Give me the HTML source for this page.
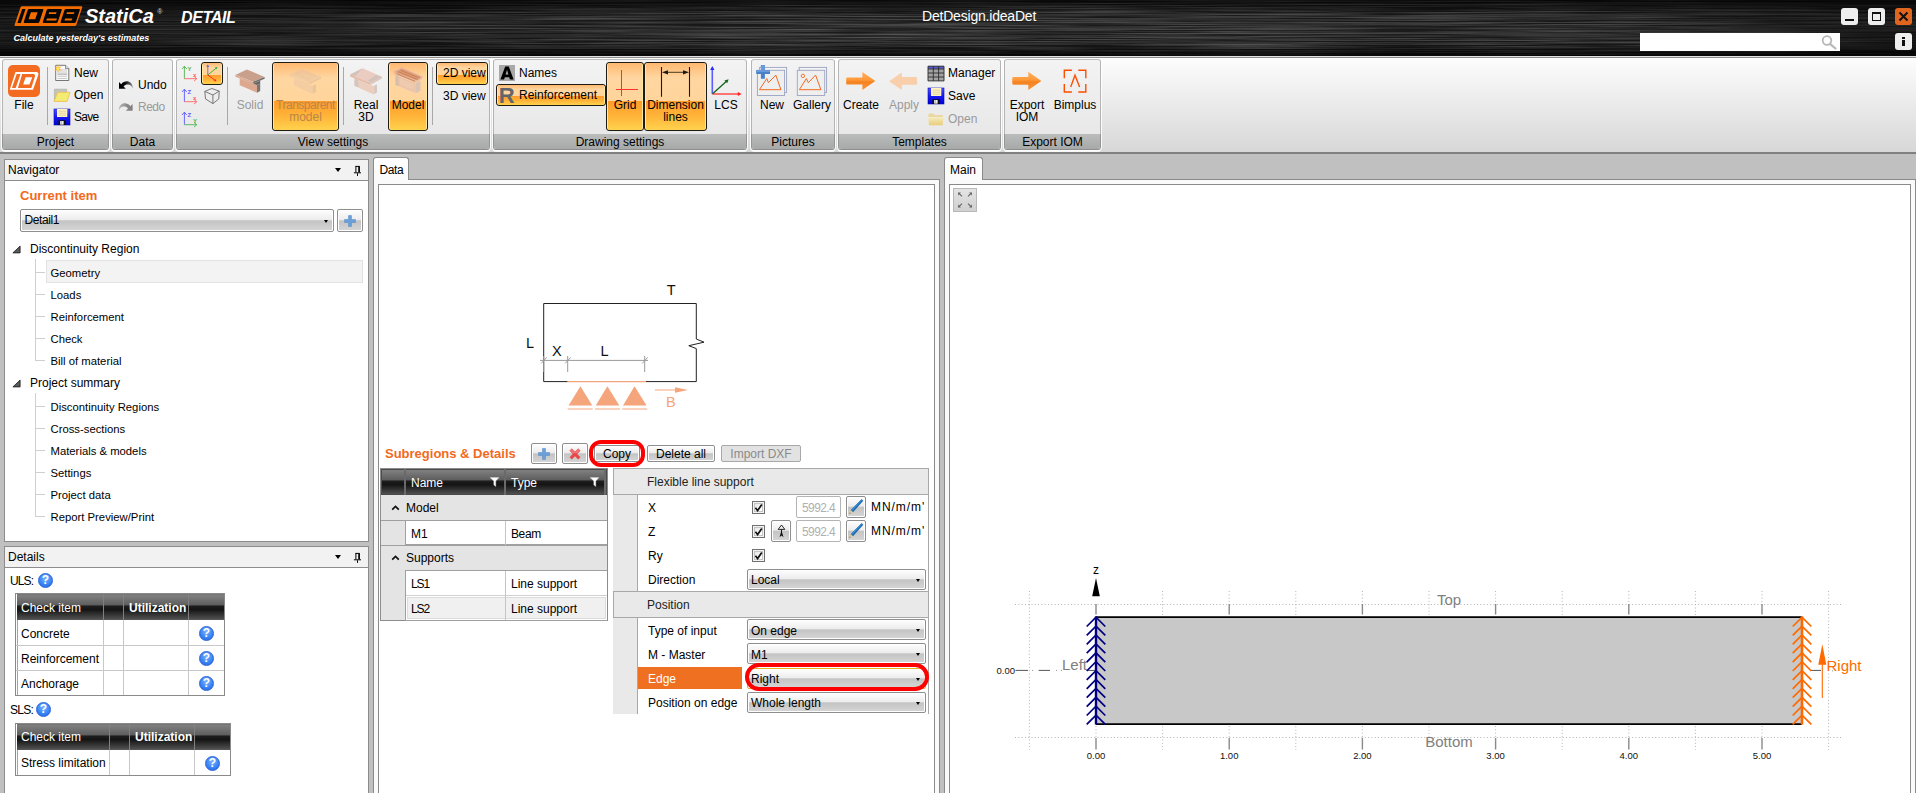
<!DOCTYPE html>
<html><head><meta charset="utf-8"><title>DetDesign.ideaDet</title>
<style>
html,body{margin:0;padding:0}
body{width:1916px;height:793px;overflow:hidden;background:#c0c0c0;font-family:"Liberation Sans",sans-serif;font-size:12px;color:#000;position:relative}
div,span,svg{position:absolute;box-sizing:border-box}
.t{white-space:nowrap;line-height:14px;font-size:12px}
.c{text-align:center}
.tr{font-size:11.3px}
/* title bar */
#tb{left:0;top:0;width:1916px;height:56px;background:linear-gradient(180deg,#000 0,#060606 20%,#0a0a0a 55%,#030303 100%)}
.wb{width:17px;height:17px;border-radius:3px;background:#eeeeee}
/* ribbon */
#rb{left:0;top:56px;width:1916px;height:98px;background:linear-gradient(180deg,#e2e2e2 0,#e2e2e2 1px,#8e8e8e 1px,#8e8e8e 2px,#fdfdfd 2px,#d7d7d7 96px,#808080 96px,#808080 98px)}
.g{top:3px;height:91px;border:1px solid #b4b4b4;border-color:#bcbcbc #b4b4b4 #8e8e8e #b4b4b4;border-radius:3px;background:linear-gradient(180deg,#f3f3f3 0,#ededed 40px,#e9e8e8 74px);box-shadow:0 0 0 1px rgba(255,255,255,.85),0 2px 0 0 rgba(255,255,255,.8)}
.gl{left:0;right:0;bottom:0;height:15.5px;border-radius:0 0 3px 3px;background:linear-gradient(180deg,#bbbdbc 0,#a7a9a8 100%);box-shadow:-1px 0 0 #949494,1px 0 0 #949494;text-align:center;line-height:16.5px;font-size:12px;white-space:nowrap}
.ob{border:1px solid #1e1a14;border-radius:3px;background:linear-gradient(180deg,#ffb870 0,#ffd6a0 22%,#ffd59c 56%,#ff9c2c 57%,#ffb338 78%,#ffd24e 100%);box-shadow:inset 1px 0 0 #ffe9a0,inset -1px 0 0 #ffe9a0}
.sep{width:1px;background:#a8a8a8;top:8px;height:58px}
.dis{color:#9a9a9a}
/* panels */
.ph{background:#f2f2f2;border:1px solid #8c8c8c}
.pb{background:#fff;border:1px solid #8c8c8c}
.tab{background:linear-gradient(180deg,#ffffff,#fafafa);border-radius:3px 3px 0 0;top:157px;height:23px;border:1px solid #8a8a8a;border-bottom:0}
.cmb{border:1px solid #8e8e8e;border-radius:2px;background:linear-gradient(180deg,#fefefe 0,#ededed 45%,#c4c4c4 52%,#d6d6d6 100%);box-shadow:inset 0 0 0 1px #fff}
.cmb i{position:absolute;right:5px;top:50%;margin-top:-1px;border:2.5px solid transparent;border-top:3.5px solid #000;border-bottom:0;width:0;height:0}
.btn{border:1px solid #8e8e8e;border-radius:2px;background:linear-gradient(180deg,#fefefe 0,#ededed 45%,#c4c4c4 52%,#d6d6d6 100%);box-shadow:inset 0 0 0 1px #fff}
.q{width:15px;height:15px;border-radius:50%;background:radial-gradient(circle at 50% 35%,#7db4ff 0,#3b86f5 55%,#1f5fe0 100%);border:1px solid #2a62d8;color:#fff;font-weight:bold;font-size:12px;line-height:13px;text-align:center}
.cb{width:13px;height:13px;background:linear-gradient(135deg,#dcdcdc,#fff 70%);border:1px solid #707070;box-shadow:inset 0 0 0 1px #f4f4f4,inset 0 0 0 2px #c4c4c4}
.th{background:linear-gradient(180deg,#6a6a6a 0,#808080 4%,#5e5e5e 42%,#1e1e1e 46%,#141414 60%,#4c4c4c 94%,#5a5a5a 100%)}
</style></head>
<body>
<div id="tb">
 <svg style="left:0;top:0" width="1916" height="56" viewBox="0 0 1916 56" preserveAspectRatio="none"><defs><filter id="bn" x="0" y="0" width="100%" height="100%"><feTurbulence type="fractalNoise" baseFrequency="0.006 0.75" numOctaves="3" seed="11" result="t"/><feColorMatrix in="t" type="matrix" values="0 0 0 0 1  0 0 0 0 1  0 0 0 0 1  1.0 0 0 0 -0.30"/></filter><linearGradient id="bm" x1="0" y1="0" x2="1" y2="0"><stop offset="0" stop-color="#fff" stop-opacity=".45"/><stop offset=".12" stop-color="#fff" stop-opacity=".6"/><stop offset=".3" stop-color="#fff" stop-opacity=".85"/><stop offset=".5" stop-color="#fff" stop-opacity="1"/><stop offset=".85" stop-color="#fff" stop-opacity=".9"/><stop offset=".95" stop-color="#fff" stop-opacity=".55"/><stop offset="1" stop-color="#fff" stop-opacity=".4"/></linearGradient><mask id="bmk"><rect width="1916" height="56" fill="url(#bm)"/></mask></defs><g mask="url(#bmk)"><rect width="1916" height="56" filter="url(#bn)" opacity=".5"/><rect width="1916" height="56" fill="#fff" opacity=".075"/></g></svg>
 <div style="left:0;top:0;width:1916px;height:56px;background:linear-gradient(180deg,rgba(0,0,0,.65) 0,rgba(0,0,0,0) 28%,rgba(0,0,0,0) 78%,rgba(0,0,0,.75) 100%)"></div>
 <svg style="left:0;top:0" width="170" height="56" viewBox="0 0 170 56">
  <g transform="translate(0,26) skewX(-18.5) translate(0,-26)">
   <rect x="14.2" y="6.2" width="61.8" height="19.8" rx="1.2" fill="#f26c00"/>
   <rect x="16.4" y="8.9" width="3.4" height="14" fill="#050505"/>
   <rect x="22.4" y="8.9" width="15.6" height="14" rx="1.2" fill="#050505"/>
   <rect x="26.3" y="12.2" width="6.7" height="7.1" fill="#f26c00"/>
   <rect x="41.4" y="8.9" width="15" height="14" rx="1.2" fill="#050505"/>
   <rect x="44.6" y="12.2" width="7.4" height="1.9" fill="#f26c00"/>
   <rect x="44.4" y="18.5" width="10" height="1.9" fill="#f26c00"/>
   <rect x="59.2" y="8.9" width="15.3" height="14" rx="1.2" fill="#050505"/>
   <rect x="62.4" y="12.2" width="7.4" height="1.9" fill="#f26c00"/>
   <rect x="62.6" y="18.5" width="7.2" height="1.9" fill="#f26c00"/>
  </g>
 </svg>
 <span class="t" id="sta" style="left:85px;top:4px;font-size:20px;line-height:24px;font-weight:bold;font-style:italic;color:#fff">StatiCa</span>
 <span class="t" style="left:157.3px;top:7.5px;font-size:7px;line-height:8px;color:#ddd">®</span>
 <span class="t" id="det" style="left:181px;top:8.5px;font-size:16px;line-height:18px;font-weight:bold;font-style:italic;color:#fff;letter-spacing:-.35px">DETAIL</span>
 <span class="t" id="tag" style="left:13.5px;top:33px;font-size:9px;line-height:11px;font-weight:bold;font-style:italic;color:#fff">Calculate yesterday's estimates</span>
 <span class="t" id="ttl" style="left:922px;top:8px;font-size:14px;line-height:16px;color:#fff;letter-spacing:-.2px">DetDesign.ideaDet</span>
 <div class="wb" style="left:1841px;top:8px"><div style="left:4px;top:11px;width:9px;height:2px;background:#111"></div></div>
 <div class="wb" style="left:1868px;top:8px"><div style="left:4px;top:4px;width:9px;height:9px;border:1px solid #111;border-top:2px solid #111"></div></div>
 <div class="wb" style="left:1895px;top:8px;background:#e0661f"><svg style="left:3px;top:3px" width="11" height="11" viewBox="0 0 11 11"><path d="M1.5 1.5L9.5 9.5M9.5 1.5L1.5 9.5" stroke="#111" stroke-width="2" fill="none"/></svg></div>
 <div style="left:1640px;top:33px;width:200px;height:18px;background:#fff"></div>
 <svg style="left:1820px;top:34px" width="18" height="16" viewBox="0 0 18 16"><circle cx="7" cy="6.5" r="4.3" fill="none" stroke="#b8b8b8" stroke-width="1.8"/><path d="M10 9.8L15.5 14.5" stroke="#b8b8b8" stroke-width="2.2" stroke-linecap="round"/></svg>
 <div class="wb" style="left:1895px;top:33px"><div style="left:7px;top:4px;width:3px;height:2px;background:#111"></div><div style="left:7px;top:7px;width:3px;height:6px;background:#111"></div></div>
</div>
<div id="rb">
 <div class="g" style="left:2px;width:107px"><div class="gl">Project</div></div>
 <div class="g" style="left:112px;width:61px"><div class="gl">Data</div></div>
 <div class="g" style="left:176px;width:314px"><div class="gl">View settings</div></div>
 <div class="g" style="left:493px;width:254px"><div class="gl">Drawing settings</div></div>
 <div class="g" style="left:751px;width:84px"><div class="gl">Pictures</div></div>
 <div class="g" style="left:838px;width:163px"><div class="gl">Templates</div></div>
 <div class="g" style="left:1004px;width:97px"><div class="gl">Export IOM</div></div>

 <!-- Project -->
 <div style="left:8px;top:9px;width:32px;height:32px;border-radius:5px;background:#f26b21">
  <svg style="left:0;top:0" width="32" height="32" viewBox="0 0 32 32"><path d="M7.5 7.1H28.6a1.9 1.9 0 0 1 1.8 2.5L25 24.8H1.7Z" fill="#fff"/><path d="M8.7 9H12.5L7.7 22.9H3.9Z" fill="#f26b21"/><path d="M14.2 9H25.4a1.7 1.7 0 0 1 1.6 2.3L23.3 22.9H9.9Z" fill="#f26b21"/><path d="M17.6 12.3H24.3L21.4 19.5H15.2Z" fill="#fff"/></svg>
 </div>
 <span class="t c" style="left:4px;width:40px;top:41.5px">File</span>
 <div class="sep" style="left:47px;top:11px"></div>
 <span class="t" style="left:74px;top:9.5px">New</span>
 <span class="t" style="left:74px;top:31.5px">Open</span>
 <span class="t" style="left:74px;top:53.5px;letter-spacing:-.7px">Save</span>
 <!-- Data -->
 <span class="t" style="left:138px;top:21.5px">Undo</span>
 <span class="t dis" style="left:138px;top:43.5px;letter-spacing:-.5px">Redo</span>
 <!-- View settings -->
 <div class="ob" style="left:201px;top:6px;width:22px;height:23px"></div>
 <div class="sep" style="left:227px;top:11px"></div>
 <span class="t c dis" style="left:230px;width:40px;top:41.5px">Solid</span>
 <div class="ob" style="left:272px;top:6px;width:67px;height:69px"></div>
 <span class="t c" style="left:272px;width:67px;top:41.5px;color:#b8864a;line-height:12.2px;margin-top:1px;letter-spacing:-.5px">Transparent<br><span style="position:static;letter-spacing:0">model</span></span>
 <div class="sep" style="left:343px;top:11px"></div>
 <span class="t c" style="left:346px;width:40px;top:42.5px;line-height:12.2px">Real<br>3D</span>
 <div class="ob" style="left:388px;top:6px;width:40px;height:69px"></div>
 <span class="t c" style="left:388px;width:40px;top:41.5px">Model</span>
 <div class="sep" style="left:432px;top:11px"></div>
 <div class="ob" style="left:436px;top:6px;width:52px;height:23px"></div>
 <span class="t" style="left:443px;top:9.5px">2D view</span>
 <span class="t" style="left:443px;top:32.5px">3D view</span>
 <!-- Drawing settings -->
 <span class="t" style="left:519px;top:9.5px">Names</span>
 <div class="ob" style="left:496px;top:28px;width:110px;height:22px"></div>
 <span class="t" style="left:519px;top:31.5px">Reinforcement</span>
 <div class="ob" style="left:606px;top:6px;width:38px;height:69px"></div>
 <span class="t c" style="left:606px;width:38px;top:41.5px">Grid</span>
 <div class="ob" style="left:644px;top:6px;width:63px;height:69px"></div>
 <span class="t c" style="left:644px;width:63px;top:42.5px;line-height:12.2px">Dimension<br>lines</span>
 <span class="t c" style="left:706px;width:40px;top:41.5px">LCS</span>
 <!-- Pictures -->
 <span class="t c" style="left:752px;width:40px;top:41.5px">New</span>
 <span class="t c" style="left:790px;width:44px;top:41.5px">Gallery</span>
 <!-- Templates -->
 <span class="t c" style="left:839px;width:44px;top:41.5px">Create</span>
 <span class="t c dis" style="left:882px;width:44px;top:41.5px">Apply</span>
 <span class="t" style="left:948px;top:9.5px">Manager</span>
 <span class="t" style="left:948px;top:32.5px">Save</span>
 <span class="t dis" style="left:948px;top:55.5px">Open</span>
 <!-- Export -->
 <span class="t c" style="left:1005px;width:44px;top:42.5px;line-height:12.2px">Export<br>IOM</span>
 <span class="t c" style="left:1050px;width:50px;top:41.5px">Bimplus</span>
</div>
<!-- ribbon icons: absolute page coordinates -->
<svg style="left:0;top:56px" width="1110" height="96" viewBox="0 56 1110 96">
<defs><style>.v{stroke:var(--v)}.h{stroke:var(--h)}</style>
 <linearGradient id="arw" x1="0" y1="0" x2="0" y2="1"><stop offset="0" stop-color="#ffb060"/><stop offset=".45" stop-color="#ff9838"/><stop offset=".55" stop-color="#f58220"/><stop offset="1" stop-color="#f9963a"/></linearGradient>
 <linearGradient id="flp" x1="0" y1="0" x2="0" y2="1"><stop offset="0" stop-color="#5050ff"/><stop offset=".5" stop-color="#1818f0"/><stop offset="1" stop-color="#0000d8"/></linearGradient>
 <linearGradient id="fld" x1="0" y1="0" x2="0" y2="1"><stop offset="0" stop-color="#f6ecc0"/><stop offset="1" stop-color="#e8cc78"/></linearGradient>
 <linearGradient id="ug" x1="0" y1="0" x2="1" y2="0"><stop offset="0" stop-color="#000"/><stop offset=".45" stop-color="#0a0a0a"/><stop offset="1" stop-color="#8a8a8a"/></linearGradient><linearGradient id="rg" x1="1" y1="0" x2="0" y2="0"><stop offset="0" stop-color="#7e7e7e"/><stop offset=".45" stop-color="#8c8c8c"/><stop offset="1" stop-color="#b8b8b8"/></linearGradient><g id="floppy"><rect x="0" y="0" width="16" height="16" fill="url(#flp)"/><rect x="0" y="0" width="16" height="16" fill="none" stroke="#0a0ab0" stroke-width=".6"/><rect x="3" y="0" width="10.3" height="8" fill="#fdf3c4"/><path d="M4.5 2.2H12M4.5 4.2H12M4.5 6.2H12" stroke="#d8c890" stroke-width=".7"/><rect x="4.4" y="11.3" width="7.6" height="4.7" fill="#111"/><rect x="6.2" y="12" width="3.4" height="3.6" fill="#fff"/><rect x="7.4" y="12" width=".8" height="3.6" fill="#999"/></g>
 <g id="axs" fill="none" stroke-width=".9"><path d="M2.4 1V13.5" class="v"/><path d="M0 3.8L2.4 1L4.8 3.8" class="v"/><path d="M2.4 13.5H14.8" class="h"/><path d="M12 11.1L14.8 13.5L12 15.9" class="h"/></g>
</defs>
<!-- New doc -->
<g><path d="M55.7 65.3H65.5L68.8 68.6V80.5H55.7Z" fill="#fafafa" stroke="#555" stroke-width=".8"/><path d="M65.5 65.3V68.6H68.8" fill="#ddd" stroke="#555" stroke-width=".6"/><path d="M58 69.9H67M57.5 72H67M57.5 76.3H67M57.5 78.5H67" stroke="#b4b4b4" stroke-width=".7"/><path d="M57.3 74.1H67.2" stroke="#9a9a9a" stroke-width="1"/><path d="M58 64.2L58.9 67.2L61.8 66.3L59.6 68.6L61.8 70.8L58.8 70L58 73L57.2 70L54.2 70.8L56.4 68.6L54.2 66.3L57.1 67.2Z" fill="#ffb030"/><circle cx="58" cy="68.6" r="1.5" fill="#fff060"/></g>
<!-- Open folder -->
<g><path d="M54.4 89.2H66.6V101H54.4Z" fill="#c4c4c0" stroke="#a8a8a0" stroke-width=".6"/><path d="M57.6 92.3H70L67.1 101.4H54.1Z" fill="#f4ec72" stroke="#f0b840" stroke-width=".7"/></g>
<!-- Save floppy -->
<use href="#floppy" x="54" y="109"/>
<!-- Undo -->
<path d="M119 88.7L119 82L121.2 84.2C123.2 81.8 126 80.9 128.6 81.6C131.4 82.4 132.9 85 132.6 88.8C131.9 86.4 130.6 85 128.4 84.6C126.6 84.3 125 84.9 123.6 86.5L125.8 88.7Z" fill="url(#ug)"/>
<!-- Redo -->
<path d="M132.6 110.7L132.6 104L130.4 106.2C128.4 103.8 125.6 102.9 123 103.6C120.2 104.4 118.7 107 119 110.8C119.7 108.4 121 107 123.2 106.6C125 106.3 126.6 106.9 128 108.5L125.8 110.7Z" fill="url(#rg)"/>
<!-- axis icons -->
<g transform="translate(182,65.2)"><use href="#axs" style="--v:#50b450;--h:#ff6464"/></g>
<g transform="translate(182,88.2)"><use href="#axs" style="--v:#5858ff;--h:#ff6464"/></g>
<g transform="translate(182,111.2)"><use href="#axs" style="--v:#5858ff;--h:#50b450"/></g>
<g font-family="Liberation Sans, sans-serif" font-size="6" font-weight="bold"><text x="187.5" y="70.6" fill="#50b450">Y</text><text x="193" y="77" fill="#ff6464">x</text><text x="187.5" y="93.6" fill="#5858ff">Z</text><text x="193" y="100" fill="#ff6464">x</text><text x="187.5" y="116.6" fill="#5858ff">Z</text><text x="193" y="123" fill="#50b450">Y</text></g>
<!-- 3d axis in button -->
<g fill="none" stroke-width="1"><path d="M207.8 75V65.5" stroke="#8a70c8"/><path d="M207.8 75L216.8 67.6" stroke="#40b040"/><path d="M207.8 75L215.6 80.6" stroke="#ff3020"/></g>
<path d="M206.3 67L207.8 64.6L209.3 67Z" fill="#7060d0"/><path d="M214.6 67.6L217.6 66.9L216.4 69.6Z" fill="#40b040"/><path d="M213.6 80.9L216.6 81.3L215.2 78.7Z" fill="#ff3020"/>
<!-- cube -->
<path d="M211.8 88.5L204.8 91.4L212.9 95L219.2 91.1ZM204.8 91.4L205.5 98.9L212.9 103.6V95M212.9 103.6L218.8 98.9L219.2 91.1" fill="none" stroke="#6a6a6a" stroke-width=".9" stroke-linejoin="round"/>
<!-- Solid T-beam -->
<g>
 <path d="M246.9 69.5L235.3 75.1L253.2 81.8L264.6 77Z" fill="#c8a08c"/>
 <path d="M235.3 75.1L253.2 81.8V83.7L235.3 76.8Z" fill="#dcac94"/>
 <path d="M253.2 81.8L264.6 77V78.7L253.2 83.7Z" fill="#74706e"/>
 <path d="M239.7 78.4L257 84.9V92.8L239.7 85.2Z" fill="#dca890"/>
 <path d="M257 84.9L260.2 83.4V90.9L257 92.8Z" fill="#7a7674"/>
 <path d="M253.2 83.7L260.2 80.7V83.4L257 84.9Z" fill="#686462"/>
</g>
<!-- Transparent T-beam -->
<g opacity=".55">
 <path d="M301.5 68.8L289.2 74.5L309.3 82.7L321 76.7Z" fill="#e8c4a4"/>
 <path d="M289.2 74.5L309.3 82.7V84.6L289.2 76.3Z" fill="#eec8a8"/>
 <path d="M309.3 82.7L321 76.7V78.6L309.3 84.6Z" fill="#dcb898"/>
 <path d="M293.9 78.3L312.5 85.9V94L293.9 85.5Z" fill="#ecc6a6"/>
 <path d="M312.5 85.9L316 84.3V92.2L312.5 94Z" fill="#dcb898"/>
 <path d="M296 73.5L303 70.5L315 76L308 79.5Z" fill="none" stroke="#e0b890" stroke-width=".6"/>
</g>
<!-- Real 3D T-beam -->
<g opacity=".75">
 <path d="M362.7 68.2L350.1 74.5L370.3 83L381.9 76.7Z" fill="#e8c0b0"/>
 <path d="M362.7 68.2L350.1 74.5L355 76.5L360 71Z" fill="#c8b4ac"/>
 <path d="M370.3 83L381.9 76.7L376 75L368 80.5Z" fill="#c8b4ac"/>
 <path d="M350.1 74.5L370.3 83V85L350.1 76.4Z" fill="#e0a88c"/>
 <path d="M370.3 83L381.9 76.7V78.6L370.3 85Z" fill="#d8b8a8"/>
 <path d="M354.5 78.3L373.4 86V94.4L354.5 85.8Z" fill="#ecc4b0"/>
 <path d="M354.5 78.3L358.5 80V87.5L354.5 85.8Z" fill="#ccb8b0"/>
 <path d="M373.4 86L377 84.3V92.4L373.4 94.4Z" fill="#d0bcb4"/>
</g>
<!-- Model -->
<g opacity=".8">
 <path d="M393 71.3L401.5 67.3L423.2 76.4L421.5 79.5L415 82.5L394.5 74.5Z" fill="#e4b8a4"/>
 <path d="M395 72L402 68.6L421.5 77L415.5 80Z" fill="#d89070"/>
 <path d="M396.5 73.6L415 81.3M398.5 71.8L418 79.6M400.5 70.3L420 78.2" stroke="#b86840" stroke-width=".9" fill="none"/>
 <path d="M395.5 75L415.5 83V93.5L395.5 85Z" fill="#ecc8b4"/>
 <path d="M395.5 75L398.5 76.2V86.3L395.5 85Z" fill="#ccb8b0"/>
 <path d="M415.5 83L420.5 80.6V91L415.5 93.5Z" fill="#d4c0b8"/>
 <path d="M399 77.5L414 83.5V91L399 85Z" fill="none" stroke="#e0b49c" stroke-width=".6"/>
</g>
<!-- A / R -->
<rect x="499" y="65" width="16" height="16" fill="#a8a8a8"/>
<path d="M505.2 66.6H508.8L513.6 79.6H509.9L509.2 77.2H504.8L504.1 79.6H500.4ZM505.6 74.4H508.4L507 69.8Z" fill="#000"/>
<text x="498.8" y="102.9" font-family="Liberation Sans, sans-serif" font-size="22" font-weight="bold" fill="#62666a">R</text>
<!-- grid cross -->
<path d="M621.5 70V96M616 89.5H638" stroke="#ff3030" stroke-width="1" fill="none"/>
<!-- dimension -->
<path d="M661.5 67V96.8M689.5 67V96.8" stroke="#1a1a1a" stroke-width="1.1" fill="none"/><path d="M665 72.3H686" stroke="#4a3a20" stroke-width="1"/><path d="M662 72.3L668 70.2V74.4ZM689 72.3L683 70.2V74.4Z" fill="#1a1a1a"/>
<!-- LCS -->
<g fill="none"><path d="M712.3 94V68" stroke="#5c5cff" stroke-width="1.6"/><path d="M712.3 94H739" stroke="#ff5454" stroke-width="1.6"/><path d="M712.6 93.7L726.5 81.2" stroke="#106818" stroke-width="1.3"/></g>
<path d="M710.2 70L712.3 66L714.4 70Z" fill="#2a2aff"/><path d="M737.8 91.9L741.6 94L737.8 96.1Z" fill="#ff2020"/><path d="M724.4 80.4L728.6 79.2L727.2 83.2Z" fill="#106818"/>
<!-- Pictures New -->
<g><rect x="759.6" y="67.4" width="27" height="25" fill="#f4f4f4" stroke="#9aa4c0" stroke-width=".9"/><rect x="757.4" y="70.3" width="27.2" height="25.2" fill="#efefef" stroke="#9aa4c0" stroke-width=".9"/><path d="M759.4 89.7L766.8 78.5L768.4 82.7L775.8 75.1L780.9 89.7Z" fill="none" stroke="#f26a21" stroke-width="1"/><path d="M760.9 65H764.9V70.1H770V74.1H764.9V78.8H760.9V74.1H756.2V70.1H760.9Z" fill="#4a80c8"/><path d="M760.9 65H764.9V70.1H770V72H756.2V70.1H760.9Z" fill="#6a98d8"/></g>
<!-- Gallery -->
<g><rect x="799.2" y="67.4" width="27.4" height="25" fill="#f4f4f4" stroke="#9aa4c0" stroke-width=".9"/><rect x="797.3" y="70.3" width="27.4" height="25.2" fill="#efefef" stroke="#9aa4c0" stroke-width=".9"/><path d="M799.3 89.7L806.4 78.5L808.3 82.7L815.6 75.1L820.9 89.7Z" fill="none" stroke="#f26a21" stroke-width="1"/><circle cx="802.9" cy="75.9" r="1.7" fill="none" stroke="#f26a21" stroke-width=".9"/></g>
<!-- Create arrow -->
<path d="M847.4 77.6H862.4V71.9L875.3 81L862.4 90.1V84.6H847.4Q846.2 84.6 846.2 83.4V78.8Q846.2 77.6 847.4 77.6Z" fill="url(#arw)"/>
<!-- Apply arrow -->
<path d="M916 77.1H901.8V72.4L889.1 81.2L901.8 90V84.8H916Q917.1 84.8 917.1 83.7V78.2Q917.1 77.1 916 77.1Z" fill="#f9ceaa"/>
<!-- Manager -->
<g><rect x="928" y="66.2" width="16" height="14.7" fill="#a4a4a4"/><rect x="928" y="66.2" width="16" height="2.6" fill="#5a5ad0"/><path d="M928 66.2H944V80.9H928ZM933.3 66.2V80.9M938.6 66.2V80.9M928 69H944M928 73H944M928 77H944" fill="none" stroke="#2c2c2c" stroke-width=".9"/></g>
<use href="#floppy" x="928" y="88"/>
<path d="M928.4 114.2Q928.4 113.4 929.2 113.4H933.6L935 115H942Q942.8 115 942.8 115.8V117H928.4Z" fill="#ead8a0"/><path d="M928.2 117.2H943.6L942.6 125.2H929Z" fill="url(#fld)"/>
<!-- Export arrow -->
<path d="M1013.5 77.1H1028.3V71.8L1041.3 81L1028.3 90V84.8H1013.5Q1012.3 84.8 1012.3 83.6V78.3Q1012.3 77.1 1013.5 77.1Z" fill="url(#arw)"/>
<!-- Bimplus -->
<path d="M1071.9 70.2H1064.3V78.2M1064.3 84H1064.3V92H1071.9M1078.3 70.2H1085.8V78.2M1085.8 84V92H1078.3M1070.7 86.9L1075 75.3L1079.6 86.9" fill="none" stroke="#ff4d00" stroke-width="1.4"/>
</svg>
<!-- Navigator panel -->
<div class="pb" style="left:4px;top:159px;width:365px;height:383px"></div>
<div class="ph" style="left:4px;top:159px;width:365px;height:22px"></div>
<span class="t" style="left:8px;top:163px">Navigator</span>
<div style="left:335px;top:168px;width:0;height:0;border:3.6px solid transparent;border-top:4.3px solid #000;border-bottom:0"></div>
<svg style="left:353px;top:164px" width="9" height="12" viewBox="0 0 9 12"><path d="M2.4 2.4H6.7M2.9 2.4V8.3M6 2.4V8.3M0.9 8.8H8M4.5 9.3V11.9" stroke="#000" fill="none" stroke-width="1"/><path d="M6.2 2.4V8.3" stroke="#000" stroke-width="1.4"/></svg>
<span class="t" style="left:20px;top:188px;font-size:13px;line-height:16px;font-weight:bold;color:#f26a21">Current item</span>
<div class="cmb" style="left:20px;top:209px;width:314px;height:23px"><i></i></div>
<span class="t" style="left:24.5px;top:213px;letter-spacing:-.4px">Detail1</span>
<div class="btn" style="left:337px;top:209px;width:26px;height:23px"><svg style="left:6px;top:5px" width="12" height="12" viewBox="0 0 12 12"><path d="M4.5 0.5h3v4h4v3h-4v4h-3v-4h-4v-3h4z" fill="#6b9fd8" stroke="#5588c8" stroke-width=".5"/></svg></div>
<!-- tree -->
<svg style="left:12px;top:244px" width="10" height="10" viewBox="0 0 10 10"><path d="M8.1 2.1V8.9H0.9Z" fill="#595959" stroke="#1a1a1a" stroke-width=".8" stroke-linejoin="round"/></svg>
<span class="t" style="left:30px;top:242px">Discontinuity Region</span>
<div style="left:46px;top:260px;width:317px;height:23px;background:#f3f3f3;border:1px solid #e2e2e2"></div>
<div style="left:35px;top:259px;width:1px;height:102px;background:#d0d0d0"></div>
<div style="left:35px;top:272px;width:10px;height:1px;background:#d0d0d0"></div>
<div style="left:35px;top:294px;width:10px;height:1px;background:#d0d0d0"></div>
<div style="left:35px;top:316px;width:10px;height:1px;background:#d0d0d0"></div>
<div style="left:35px;top:338px;width:10px;height:1px;background:#d0d0d0"></div>
<div style="left:35px;top:360px;width:10px;height:1px;background:#d0d0d0"></div>
<span class="t tr" style="left:50.5px;top:266px">Geometry</span>
<span class="t tr" style="left:50.5px;top:288px">Loads</span>
<span class="t tr" style="left:50.5px;top:310px">Reinforcement</span>
<span class="t tr" style="left:50.5px;top:332px">Check</span>
<span class="t tr" style="left:50.5px;top:354px">Bill of material</span>
<svg style="left:12px;top:378px" width="10" height="10" viewBox="0 0 10 10"><path d="M8.1 2.1V8.9H0.9Z" fill="#595959" stroke="#1a1a1a" stroke-width=".8" stroke-linejoin="round"/></svg>
<span class="t" style="left:30px;top:376px">Project summary</span>
<div style="left:35px;top:393px;width:1px;height:124px;background:#d0d0d0"></div>
<div style="left:35px;top:406px;width:10px;height:1px;background:#d0d0d0"></div>
<div style="left:35px;top:428px;width:10px;height:1px;background:#d0d0d0"></div>
<div style="left:35px;top:450px;width:10px;height:1px;background:#d0d0d0"></div>
<div style="left:35px;top:472px;width:10px;height:1px;background:#d0d0d0"></div>
<div style="left:35px;top:494px;width:10px;height:1px;background:#d0d0d0"></div>
<div style="left:35px;top:516px;width:10px;height:1px;background:#d0d0d0"></div>
<span class="t tr" style="left:50.5px;top:400px">Discontinuity Regions</span>
<span class="t tr" style="left:50.5px;top:422px">Cross-sections</span>
<span class="t tr" style="left:50.5px;top:444px">Materials &amp; models</span>
<span class="t tr" style="left:50.5px;top:466px">Settings</span>
<span class="t tr" style="left:50.5px;top:488px">Project data</span>
<span class="t tr" style="left:50.5px;top:510px">Report Preview/Print</span>
<!-- Details panel -->
<div class="pb" style="left:4px;top:546px;width:365px;height:260px"></div>
<div class="ph" style="left:4px;top:546px;width:365px;height:22px"></div>
<span class="t" style="left:8px;top:550px">Details</span>
<div style="left:335px;top:555px;width:0;height:0;border:3.6px solid transparent;border-top:4.3px solid #000;border-bottom:0"></div>
<svg style="left:353px;top:551px" width="9" height="12" viewBox="0 0 9 12"><path d="M2.4 2.4H6.7M2.9 2.4V8.3M6 2.4V8.3M0.9 8.8H8M4.5 9.3V11.9" stroke="#000" fill="none" stroke-width="1"/><path d="M6.2 2.4V8.3" stroke="#000" stroke-width="1.4"/></svg>
<span class="t" style="left:10px;top:574px;letter-spacing:-.9px">ULS:</span>
<div class="q" style="left:38px;top:573px">?</div>
<!-- ULS table -->
<div style="left:15px;top:593px;width:210px;height:103px;background:#fff;border:1px solid #8a8a8a"></div>
<div class="th" style="left:17px;top:594px;width:207px;height:26px"></div>
<div style="left:17px;top:620px;width:1px;height:75px;background:#a4a4a4"></div>
<div style="left:103px;top:594px;width:1px;height:101px;background:#c8c8c8"></div>
<div style="left:123px;top:594px;width:1px;height:101px;background:#c8c8c8"></div>
<div style="left:188px;top:594px;width:1px;height:101px;background:#c8c8c8"></div>
<div style="left:16px;top:645px;width:208px;height:1px;background:#c8c8c8"></div>
<div style="left:16px;top:670px;width:208px;height:1px;background:#c8c8c8"></div>
<div style="left:103px;top:594px;width:1px;height:26px;background:#808080"></div>
<div style="left:123px;top:594px;width:1px;height:26px;background:#808080"></div>
<div style="left:188px;top:594px;width:1px;height:26px;background:#808080"></div>
<span class="t" style="left:21px;top:601px;color:#fff">Check item</span>
<span class="t" style="left:129px;top:601px;color:#fff;font-weight:bold">Utilization</span>
<span class="t" style="left:21px;top:627px">Concrete</span>
<span class="t" style="left:21px;top:652px">Reinforcement</span>
<span class="t" style="left:21px;top:677px">Anchorage</span>
<div class="q" style="left:199px;top:626px">?</div>
<div class="q" style="left:199px;top:651px">?</div>
<div class="q" style="left:199px;top:676px">?</div>
<span class="t" style="left:10px;top:703px;letter-spacing:-.7px">SLS:</span>
<div class="q" style="left:36px;top:702px">?</div>
<div style="left:15px;top:723px;width:216px;height:53px;background:#fff;border:1px solid #8a8a8a"></div>
<div class="th" style="left:17px;top:724px;width:213px;height:26px"></div>
<div style="left:17px;top:750px;width:1px;height:25px;background:#a4a4a4"></div>
<div style="left:109px;top:724px;width:1px;height:51px;background:#c8c8c8"></div>
<div style="left:129px;top:724px;width:1px;height:51px;background:#c8c8c8"></div>
<div style="left:194px;top:724px;width:1px;height:51px;background:#c8c8c8"></div>
<div style="left:109px;top:724px;width:1px;height:26px;background:#808080"></div>
<div style="left:129px;top:724px;width:1px;height:26px;background:#808080"></div>
<div style="left:194px;top:724px;width:1px;height:26px;background:#808080"></div>
<span class="t" style="left:21px;top:730px;color:#fff">Check item</span>
<span class="t" style="left:135px;top:730px;color:#fff;font-weight:bold">Utilization</span>
<span class="t" style="left:21px;top:756px">Stress limitation</span>
<div class="q" style="left:205px;top:755.5px">?</div>
<!-- splitters -->
<!-- Data panel -->
<div style="left:373px;top:179px;width:567px;height:620px;background:#fafafa;border:1px solid #8a8a8a"></div>
<div style="left:378px;top:184px;width:557px;height:620px;background:#fff;border:1px solid #8a8a8a"></div>
<div class="tab" style="left:373px;width:36px"></div>
<span class="t" style="left:379.5px;top:163px;letter-spacing:-.4px">Data</span>
<!-- sketch -->
<svg style="left:510px;top:270px" width="220" height="150" viewBox="510 270 220 150">
 <path d="M543.7 381.6V303.5H696.3V339L704 342.2L688.8 345.7L696.3 348.6V381.6H646M567.7 381.6H543.7" fill="none" stroke="#222" stroke-width="1"/>
 <path d="M567.7 381.6H646" stroke="#f4a57c" stroke-width="1.2"/>
 <g stroke="#9a9a9a" stroke-width="1" fill="none"><path d="M540 360.4H648M543.7 356V372M567.7 356V372M644.7 356V372M541.2 363.4L546.7 357.4M565.2 363.4L570.7 357.4M642.2 363.4L647.7 357.4"/></g>
 <g fill="#f4a57c"><path d="M580.4 386.3L592.3 405.6H568.6Z"/><path d="M607.4 386.3L619.3 405.6H595.7Z"/><path d="M634.5 386.3L646.6 405.6H623Z"/></g>
 <g stroke="#f4a57c" stroke-width="1"><path d="M567.7 409H592.7M595 409H620M622.3 409H647.3M655 390H676"/></g>
 <path d="M675 387.3L688 390L675 392.7Z" fill="#f4a57c"/>
 <g font-family="Liberation Sans, sans-serif" font-size="14.5" fill="#111"><text x="666.7" y="294.8">T</text><text x="526" y="348.3">L</text><text x="552" y="356">X</text><text x="600.5" y="356">L</text><text x="666" y="407" fill="#f4a57c">B</text></g>
</svg>
<span class="t" style="left:385px;top:446px;font-size:13px;line-height:16px;font-weight:bold;color:#f26a21">Subregions &amp; Details</span>
<div class="btn" style="left:531px;top:443px;width:26px;height:21px"><svg style="left:6px;top:4px" width="12" height="12" viewBox="0 0 12 12"><path d="M4.5 0.5h3v4h4v3h-4v4h-3v-4h-4v-3h4z" fill="#6b9fd8" stroke="#5588c8" stroke-width=".5"/></svg></div>
<div class="btn" style="left:562px;top:443px;width:26px;height:21px"><svg style="left:6px;top:4px" width="12" height="12" viewBox="0 0 12 12"><path d="M0.6 2.8L2.8 0.6L6 3.8L9.2 0.6L11.4 2.8L8.2 6L11.4 9.2L9.2 11.4L6 8.2L2.8 11.4L0.6 9.2L3.8 6Z" fill="#e8474a"/><path d="M0.6 2.8L2.8 0.6L6 3.8L9.2 0.6L11.4 2.8L9 5.2H3Z" fill="#f07074"/></svg></div>
<div class="btn" style="left:594px;top:445px;width:46px;height:17px"></div>
<span class="t c" style="left:594px;width:46px;top:446.5px">Copy</span>
<div class="btn" style="left:647px;top:445px;width:68px;height:17px"></div>
<span class="t c" style="left:647px;width:68px;top:446.5px">Delete all</span>
<div style="left:721px;top:445px;width:80px;height:17px;background:#e2e2e2;border:1px solid #a8a8a8;border-radius:2px"></div>
<span class="t c" style="left:721px;width:80px;top:446.5px;color:#8a8a8a">Import DXF</span>
<div style="left:588.9px;top:440.4px;width:56px;height:26.2px;border:4px solid #f00;border-radius:12px"></div>
<!-- table -->
<div style="left:380px;top:468px;width:228px;height:153px;background:#e4e4e4;border:1px solid #8c8c8c"></div>
<div class="th" style="left:381px;top:469px;width:226px;height:26px;box-shadow:inset 0 0 0 1px #4a4a4a"></div>
<div style="left:404px;top:469px;width:2px;height:26px;background:#6a6a6a"></div>
<div style="left:504px;top:469px;width:2px;height:26px;background:#6a6a6a"></div>
<div style="left:604px;top:469px;width:2px;height:26px;background:#6a6a6a"></div>
<span class="t" style="left:411px;top:476px;color:#fff">Name</span>
<span class="t" style="left:511px;top:476px;color:#fff">Type</span>
<svg style="left:489px;top:476px" width="12" height="12" viewBox="0 0 12 12"><path d="M1 1.5H10L6.8 5V10.5L4.8 9V5Z" fill="#fff" stroke="#ccc" stroke-width=".4"/></svg>
<svg style="left:589px;top:476px" width="12" height="12" viewBox="0 0 12 12"><path d="M1 1.5H10L6.8 5V10.5L4.8 9V5Z" fill="#fff" stroke="#ccc" stroke-width=".4"/></svg>
<svg style="left:391px;top:504px" width="9" height="7" viewBox="0 0 9 7"><path d="M1.2 5.6L4.5 2.4L7.8 5.6" fill="none" stroke="#111" stroke-width="1.7"/></svg>
<span class="t" style="left:406px;top:501px">Model</span>
<div style="left:381px;top:520px;width:226px;height:1px;background:#a0a0a0"></div>
<div style="left:405px;top:520px;width:202px;height:25px;background:#fff;border:1px solid #a0a0a0;border-right:0"></div>
<div style="left:505px;top:521px;width:1px;height:24px;background:#c4c4c4"></div>
<span class="t" style="left:411px;top:527px">M1</span>
<span class="t" style="left:511px;top:527px;letter-spacing:-.4px">Beam</span>
<div style="left:381px;top:545px;width:226px;height:1px;background:#a0a0a0"></div>
<svg style="left:391px;top:554px" width="9" height="7" viewBox="0 0 9 7"><path d="M1.2 5.6L4.5 2.4L7.8 5.6" fill="none" stroke="#111" stroke-width="1.7"/></svg>
<span class="t" style="left:406px;top:551px">Supports</span>
<div style="left:405px;top:570px;width:202px;height:51px;background:#fff;border:1px solid #a0a0a0;border-right:0"></div>
<div style="left:406px;top:595px;width:201px;height:1px;background:#d0d0d0"></div>
<div style="left:407px;top:597px;width:199px;height:22px;background:#f0f0f0;border:1px solid #dcdcdc"></div>
<div style="left:505px;top:571px;width:1px;height:49px;background:#c4c4c4"></div>
<span class="t" style="left:411px;top:577px;letter-spacing:-1.1px">LS1</span>
<span class="t" style="left:511px;top:577px">Line support</span>
<span class="t" style="left:411px;top:602px;letter-spacing:-1.1px">LS2</span>
<span class="t" style="left:511px;top:602px">Line support</span>
<!-- property grid -->
<div style="left:613px;top:468px;width:316px;height:246px;background:#fff;border-right:1px solid #a8a8a8"></div>
<div style="left:613px;top:468px;width:25px;height:246px;background:#e9e9e9;border-right:1px solid #a8a8a8"></div>
<div style="left:613px;top:468px;width:316px;height:27px;background:#e9e9e9;border:1px solid #a8a8a8"></div>
<span class="t" style="left:647px;top:475px;color:#222">Flexible line support</span>
<div style="left:613px;top:591px;width:316px;height:27px;background:#e9e9e9;border:1px solid #a8a8a8"></div>
<span class="t" style="left:647px;top:598px;color:#222">Position</span>
<span class="t" style="left:648px;top:500.5px">X</span>
<span class="t" style="left:648px;top:524.5px">Z</span>
<span class="t" style="left:648px;top:549px">Ry</span>
<span class="t" style="left:648px;top:573px">Direction</span>
<span class="t" style="left:648px;top:624px">Type of input</span>
<span class="t" style="left:648px;top:648px">M - Master</span>
<div style="left:638px;top:667px;width:104px;height:22px;background:#f07021"></div>
<span class="t" style="left:648px;top:672px;color:#fff">Edge</span>
<span class="t" style="left:648px;top:696px">Position on edge</span>
<!-- checkboxes -->
<div class="cb" style="left:752px;top:501px"><svg style="left:1px;top:1px" width="9" height="9" viewBox="0 0 9 9"><path d="M1.4 4.8L3.6 7.6L7.8 1.4" fill="none" stroke="#111" stroke-width="1.7"/></svg></div>
<div class="cb" style="left:752px;top:525px"><svg style="left:1px;top:1px" width="9" height="9" viewBox="0 0 9 9"><path d="M1.4 4.8L3.6 7.6L7.8 1.4" fill="none" stroke="#111" stroke-width="1.7"/></svg></div>
<div class="cb" style="left:752px;top:549px"><svg style="left:1px;top:1px" width="9" height="9" viewBox="0 0 9 9"><path d="M1.4 4.8L3.6 7.6L7.8 1.4" fill="none" stroke="#111" stroke-width="1.7"/></svg></div>
<div style="left:796px;top:496px;width:45px;height:22px;background:#fff;border:1px solid #b4b4b4;border-radius:2px"></div>
<div style="left:796px;top:520px;width:45px;height:22px;background:#fff;border:1px solid #b4b4b4;border-radius:2px"></div>
<span class="t" style="left:802px;top:501px;color:#b0b0b0;letter-spacing:-.6px">5992.4</span>
<span class="t" style="left:802px;top:525px;color:#b0b0b0;letter-spacing:-.6px">5992.4</span>
<div class="btn" style="left:846px;top:496px;width:20px;height:22px"><svg style="left:1px;top:1px" width="16" height="17" viewBox="0 0 16 17"><path d="M13.6 1.2L15.3 2.8L5 14.2L2.6 12.2Z" fill="#1c68ac"/><path d="M13.6 1.2L14.4 2L4 13.3L2.6 12.2Z" fill="#3a8ad0"/><path d="M2.6 12.2L5 14.2L1.4 15.8Z" fill="#e8c890"/><path d="M1.4 15.8L2.6 15.3L1.9 14.6Z" fill="#222"/></svg></div>
<div class="btn" style="left:846px;top:520px;width:20px;height:22px"><svg style="left:1px;top:1px" width="16" height="17" viewBox="0 0 16 17"><path d="M13.6 1.2L15.3 2.8L5 14.2L2.6 12.2Z" fill="#1c68ac"/><path d="M13.6 1.2L14.4 2L4 13.3L2.6 12.2Z" fill="#3a8ad0"/><path d="M2.6 12.2L5 14.2L1.4 15.8Z" fill="#e8c890"/><path d="M1.4 15.8L2.6 15.3L1.9 14.6Z" fill="#222"/></svg></div>
<div class="btn" style="left:771px;top:520px;width:20px;height:22px"><svg style="left:4px;top:3px" width="11" height="14" viewBox="0 0 11 14"><path d="M5.5 1L2.2 5.4H8.8Z" fill="none" stroke="#111" stroke-width=".9"/><path d="M5.5 5.4V9" stroke="#111" stroke-width="1"/><path d="M5.5 6.6L3.5 13.2L5.5 11.6L7.5 13.2Z" fill="#111"/></svg></div>
<span class="t" style="left:871px;top:499.5px;letter-spacing:.95px">MN/m/m'</span>
<span class="t" style="left:871px;top:523.5px;letter-spacing:.95px">MN/m/m'</span>
<div class="cmb" style="left:747px;top:569px;width:179px;height:21px"><i></i></div>
<span class="t" style="left:751px;top:573px">Local</span>
<div class="cmb" style="left:747px;top:619px;width:179px;height:21px"><i></i></div>
<span class="t" style="left:751px;top:624px">On edge</span>
<div class="cmb" style="left:747px;top:643px;width:179px;height:21px"><i></i></div>
<span class="t" style="left:751px;top:648px">M1</span>
<div class="cmb" style="left:747px;top:668px;width:179px;height:21px;border-color:#e8b020"><i></i></div>
<span class="t" style="left:751px;top:672px">Right</span>
<div class="cmb" style="left:747px;top:692px;width:179px;height:21px"><i></i></div>
<span class="t" style="left:751px;top:696px">Whole length</span>
<div style="left:745px;top:662.8px;width:184px;height:28.2px;border:4px solid #f00;border-radius:14px"></div>
<!-- Main panel -->
<div style="left:944px;top:179px;width:972px;height:620px;background:#fafafa;border:1px solid #8a8a8a"></div>
<div style="left:949px;top:184px;width:962px;height:620px;background:#fff;border:1px solid #8a8a8a"></div>
<div class="tab" style="left:944px;width:39px"></div>
<span class="t" style="left:950px;top:163px">Main</span>
<div style="left:953px;top:188px;width:24px;height:24px;background:linear-gradient(180deg,#e4e4e4,#d0d0d0);border:1px solid #b8b8b8"><svg style="left:0;top:0" width="22" height="22" viewBox="0 0 22 22"><g stroke="#6a6a6a" stroke-width="1.1" fill="#6a6a6a"><path d="M8 7.4L4.6 4M14 7.4L17.4 4M8 14.6L4.6 18M14 14.6L17.4 18" fill="none"/><path d="M4 3.4H7L4 6.4ZM18 3.4H15L18 6.4ZM4 18.6H7L4 15.6ZM18 18.6H15L18 15.6Z" stroke="none"/></g></svg></div>
<svg style="left:990px;top:560px" width="900" height="210" viewBox="990 560 900 210">
<g stroke="#b4b4b4" stroke-width="1" stroke-dasharray="1 2.3" fill="none">
<path d="M1015 604.5H1843M1015 737.5H1843"/>
<path d="M1029.4 591V750M1096.0 726V737M1162.6 591V750M1229.2 591V604M1229.2 726V737M1295.8 591V750M1362.4 591V604M1362.4 726V737M1429.0 591V750M1495.6 591V604M1495.6 726V737M1562.2 591V750M1628.8 591V604M1628.8 726V737M1695.4 591V750M1762.0 591V604M1762.0 726V737M1828.6 591V750"/>
</g>
<path d="M1096.0 604V614.5M1096.0 738V749.5M1229.2 604V614.5M1229.2 738V749.5M1362.4 604V614.5M1362.4 738V749.5M1495.6 604V614.5M1495.6 738V749.5M1628.8 604V614.5M1628.8 738V749.5M1762.0 604V614.5M1762.0 738V749.5" stroke="#8a8a8a" stroke-width="1.4" fill="none"/>
<rect x="1096" y="617.2" width="706" height="106.9" fill="#c8c8c8"/>
<path d="M1096 617.2H1802M1096 724.1H1802" stroke="#000" stroke-width="1.7" fill="none"/>
<path d="M1015.5 670.4H1028M1038.6 670.4H1050M1087 670.4H1096M1810 670.4H1821" stroke="#555" stroke-width="1" fill="none"/>
<path d="M1032 670.4h1M1056 670.4h1M1061 670.4h1M1832 670.9h1" stroke="#999" stroke-width="1" fill="none"/>
<path d="M1096 617.2V724.1M1086.7 626.5L1096 617.2L1105.3 626.5M1086.7 635.4L1096 626.1L1105.3 635.4M1086.7 644.3L1096 635.0L1105.3 644.3M1086.7 653.2L1096 643.9L1105.3 653.2M1086.7 662.1L1096 652.8L1105.3 662.1M1086.7 671.0L1096 661.7L1105.3 671.0M1086.7 679.9L1096 670.6L1105.3 679.9M1086.7 688.8L1096 679.5L1105.3 688.8M1086.7 697.7L1096 688.4L1105.3 697.7M1086.7 706.6L1096 697.3L1105.3 706.6M1086.7 715.5L1096 706.2L1105.3 715.5M1086.7 724.4L1096 715.1L1105.3 724.4" stroke="#000080" stroke-width="1.7" fill="none"/>
<path d="M1096 616.5V724.6" stroke="#000080" stroke-width="2.4" fill="none"/>
<path d="M1802 617.2V724.1M1792.7 626.5L1802 617.2L1811.3 626.5M1792.7 635.4L1802 626.1L1811.3 635.4M1792.7 644.3L1802 635.0L1811.3 644.3M1792.7 653.2L1802 643.9L1811.3 653.2M1792.7 662.1L1802 652.8L1811.3 662.1M1792.7 671.0L1802 661.7L1811.3 671.0M1792.7 679.9L1802 670.6L1811.3 679.9M1792.7 688.8L1802 679.5L1811.3 688.8M1792.7 697.7L1802 688.4L1811.3 697.7M1792.7 706.6L1802 697.3L1811.3 706.6M1792.7 715.5L1802 706.2L1811.3 715.5M1792.7 724.4L1802 715.1L1811.3 724.4" stroke="#ff6a00" stroke-width="1.7" fill="none"/>
<path d="M1802 616.5V724.6" stroke="#ff6a00" stroke-width="2.6" fill="none"/>
<path d="M1096 578L1092.2 596.3H1099.8Z" fill="#000"/>
<path d="M1822.3 664V698" stroke="#ff6a00" stroke-width="1.1"/><path d="M1822.3 644.3L1818.3 664.8H1826.3Z" fill="#ff6a00"/>
<g font-family="Liberation Sans, sans-serif">
<text x="1096" y="573.6" font-size="12" text-anchor="middle" fill="#000">z</text>
<g font-size="15" fill="#808080"><text x="1449" y="605.4" text-anchor="middle">Top</text><text x="1449" y="746.8" text-anchor="middle">Bottom</text><text x="1062" y="670.4">Left</text><text x="1826.5" y="670.6" fill="#ff6a00">Right</text></g>
<g font-size="9.5" fill="#111" text-anchor="middle">
<text x="1096.0" y="759.3">0.00</text>
<text x="1229.2" y="759.3">1.00</text>
<text x="1362.4" y="759.3">2.00</text>
<text x="1495.6" y="759.3">3.00</text>
<text x="1628.8" y="759.3">4.00</text>
<text x="1762.0" y="759.3">5.00</text>
<text x="1015" y="673.8" text-anchor="end">0.00</text>
</g></g></svg>
</body></html>
